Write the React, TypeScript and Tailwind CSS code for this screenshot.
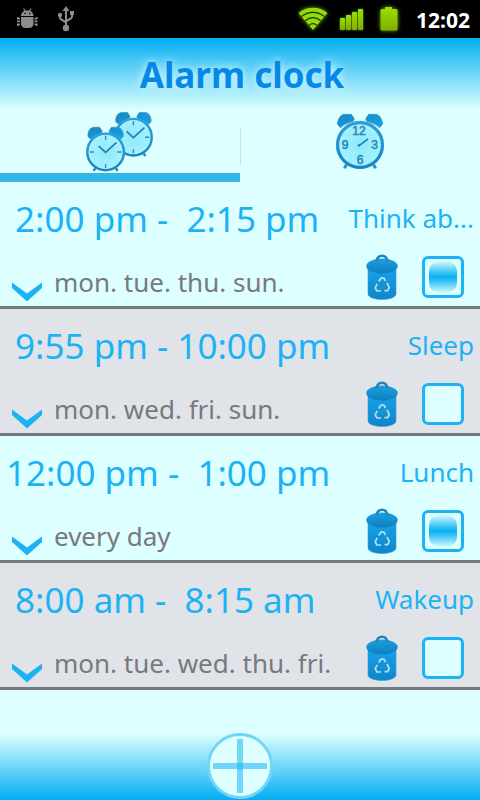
import { useState } from 'react'

const ALARMS = [
  { id: 'a1', time: ' 2:00 pm -  2:15 pm', name: 'Think ab...', days: 'mon. tue. thu. sun.', on: true },
  { id: 'a2', time: ' 9:55 pm - 10:00 pm', name: 'Sleep', days: 'mon. wed. fri. sun.', on: false },
  { id: 'a3', time: '12:00 pm -  1:00 pm', name: 'Lunch', days: 'every day', on: true },
  { id: 'a4', time: ' 8:00 am -  8:15 am', name: 'Wakeup', days: 'mon. tue. wed. thu. fri.', on: false },
]

type Alarm = (typeof ALARMS)[number]

function StatusBar() {
  return (
    <div className="flex h-[38px] items-center justify-between bg-black pl-4 pr-2">
      <div className="flex items-center gap-4">
        <svg width="24" height="22" viewBox="0 0 24 22" fill="#8c8c8c">
          <path d="M5 8C5 4.500 7.500 2.500 11.300 2.500S17.500 4.500 17.500 8z" />
          <path d="M7.500 0.500l2 3M15 0.500l-2 3" stroke="#8c8c8c" strokeWidth="1.200" />
          <circle cx="9" cy="5.500" r="0.800" fill="#000" />
          <circle cx="13.600" cy="5.500" r="0.800" fill="#000" />
          <path d="M5 9h12.500v6.500c0 3-2 4.500-4.500 4.500H9.500C7 20 5 18.500 5 15.500z" />
          <path d="M1 9h1.500v.8H4v1.700H1zM1 12.500h3v1.800H1zM1 18h1.500v-.8H4v-1.700H1zM21.500 9H20v.8h-1.500v1.700h3zM21.500 12.500h-3v1.800h3zM21.500 18H20v-.8h-1.500v-1.700h3z" />
        </svg>
        <svg width="20" height="26" viewBox="0 0 20 26" fill="#8c8c8c">
          <path d="M10 4v18M4 9v3c0 2 6 3 6 5M16 8v3c0 2-6 3-6 5" stroke="#8c8c8c" strokeWidth="2" fill="none" />
          <path d="M10 0l3.500 5h-7z" />
          <circle cx="10" cy="22" r="3.200" />
          <circle cx="4" cy="9" r="2.200" />
          <path d="M14 5h4v4h-4z" />
        </svg>
      </div>
      <div className="flex items-center gap-2">
        <svg width="34" height="30" viewBox="0 0 34 30" className="drop-shadow-[0_0_2px_#6aa800]">
          <defs>
            <linearGradient id="green" x1="0" y1="0" x2="0" y2="1">
              <stop offset="0" stopColor="#9be000" />
              <stop offset="1" stopColor="#7fae00" />
            </linearGradient>
          </defs>
          <path d="M17 26L2.500 9C10.500 2 23.500 2 31.500 9z" fill="#8fdc08" />
          <path d="M5.500 12.500c7-5.500 16-5.500 23 0M9.200 16.800c5-4 10.600-4 15.600 0M13 21.300c2.500-2 5.500-2 8 0" stroke="#1d3300" strokeWidth="1.200" fill="none" />
        </svg>
        <svg width="26" height="30" viewBox="0 0 26 30" fill="url(#green)" className="drop-shadow-[0_0_1px_#6aa800]">
          <rect x="2" y="14" width="5" height="12" rx="1" />
          <rect x="8" y="11" width="5" height="15" rx="1" />
          <rect x="14" y="8" width="5" height="18" rx="1" />
          <rect x="20" y="5" width="5" height="21" rx="1" />
        </svg>
        <svg width="34" height="30" viewBox="0 0 34 30" fill="url(#green)" className="drop-shadow-[0_0_2px_#6aa800]">
          <path d="M13 3h7v2h4q1.500 0 1.500 1.500v18.500q0 1.500-1.500 1.500H10q-1.500 0-1.500-1.500V6.500Q8.500 5 10 5h3z" />
        </svg>
        <span className="w-[58px] pt-0.5 text-center text-[21px] font-bold leading-6 text-white">12:02</span>
      </div>
    </div>
  )
}

function ClockDefs() {
  return (
    <defs>
      <linearGradient id="rim" x1="0" y1="0" x2="0" y2="1">
        <stop offset="0" stopColor="#2a9fdc" />
        <stop offset="1" stopColor="#1187c8" />
      </linearGradient>
      <linearGradient id="bell" x1="0" y1="0" x2="1" y2="1">
        <stop offset="0" stopColor="#1a86c4" />
        <stop offset="1" stopColor="#12a5ea" />
      </linearGradient>
      <radialGradient id="face">
        <stop offset="0" stopColor="#8ceafa" />
        <stop offset="1" stopColor="#a8f1ff" />
      </radialGradient>
    </defs>
  )
}

function SmallClock() {
  return (
    <g>
      <path d="M-29 46l-6 9M29 46l6 9" stroke="#2a86bb" strokeWidth="7" />
      <path d="M-51-44c-3-16 7-28 17-28h17l7 11-3 11c-12 3-20 8-27 15zM51-44c3-16-7-28-17-28H17l-7 11 3 11c12 3 20 8 27 15z" fill="url(#bell)" stroke="#3d93bf" strokeWidth="2" />
      <circle r="54" fill="url(#face)" stroke="#74a9bf" strokeWidth="6" />
      <circle r="53" fill="none" stroke="url(#rim)" strokeWidth="6" />
      <path d="M0-47v12M0 47V35M-46 0h12M46 0H34" stroke="#2a8fbe" strokeWidth="4" />
      <path d="M-20-17L0 1l32-29" fill="none" stroke="#1d82b4" strokeWidth="5" />
    </g>
  )
}

function TwoClocksIcon() {
  return (
    <svg width="69" height="62" viewBox="46 33 201 180">
      <ClockDefs />
      <g transform="translate(187 109)">
        <SmallClock />
      </g>
      <g transform="translate(106 152)">
        <SmallClock />
      </g>
    </svg>
  )
}

function ClockIcon() {
  return (
    <svg width="50" height="60" viewBox="77 36 150 180">
      <path d="M114 190l-9 15M190 190l9 15" stroke="#2a8fc6" strokeWidth="9" />
      <path d="M84 72c2-16 10-29 22-29h20l9 13-3 8c-17 4-29 10-39 19zM220 72c-2-16-10-29-22-29h-20l-9 13 3 8c17 4 29 10 39 19z" fill="url(#bell)" stroke="#3d93bf" strokeWidth="2" />
      <circle cx="152" cy="135" r="69" fill="url(#face)" stroke="#74a9bf" strokeWidth="7" />
      <circle cx="152" cy="135" r="67" fill="none" stroke="url(#rim)" strokeWidth="9" />
      <path d="M150 136l26-19" stroke="#1688c4" strokeWidth="5" />
      <circle cx="149" cy="136" r="4" fill="#1688c4" />
      <g fill="#2286b6" stroke="#2286b6" strokeWidth="1.500" fontSize="36" fontFamily="Liberation Sans, sans-serif" textAnchor="middle">
        <text x="149" y="105">12</text>
        <text x="196" y="148">3</text>
        <text x="152" y="192">6</text>
        <text x="107" y="148">9</text>
      </g>
    </svg>
  )
}

function TrashIcon() {
  return (
    <svg width="34" height="46" viewBox="0 0 34 46">
      <defs>
        <linearGradient id="can" x1="0" y1="0" x2="0" y2="1">
          <stop offset="0" stopColor="#18a3e8" />
          <stop offset="1" stopColor="#0f85c9" />
        </linearGradient>
        <linearGradient id="lid" x1="0" y1="0" x2="0" y2="1">
          <stop offset="0" stopColor="#1e9fe0" />
          <stop offset="1" stopColor="#0d7fc0" />
        </linearGradient>
      </defs>
      <path d="M3 13h28v27c0 3-6 5.500-14 5.500S3 43 3 40z" fill="url(#can)" stroke="#3a9ccf" strokeWidth="0.600" />
      <ellipse cx="17" cy="12" rx="15.700" ry="7.500" fill="url(#lid)" />
      <path d="M11.500 7.500C12 3.500 14 1.800 17 1.800s5 1.700 5.500 5.700" fill="none" stroke="#2386b9" strokeWidth="2.600" />
      <path d="M13.800 27.500l2-3.300h3.200l1.500 2.800M22 29l2.300 4.500-1.600 3.200h-3.200M16 37h-4l-1.800-3.200 2-4" fill="none" stroke="#b9dcef" strokeWidth="1.700" strokeLinejoin="round" />
    </svg>
  )
}

function AlarmRow({ alarm, onToggle }: { alarm: Alarm; onToggle: () => void }) {
  return (
    <li className="border-b-3 border-[#78797e] odd:bg-[#deffff] even:bg-[#e0e4e8]">
      <div className="flex h-[72px] items-center justify-between px-1.5 pt-0.5 text-[#1cb2f4]">
        <span className="whitespace-pre text-[35px]">{alarm.time}</span>
        <label htmlFor={alarm.id} className="pb-0.5 text-[26px]">
          {alarm.name}
        </label>
      </div>
      <div className="flex h-[52px] items-start pl-3 pr-4">
        <button aria-label="Show details" className="pt-7">
          <svg width="30" height="20" viewBox="0 0 30 20">
            <path d="M0 0.500l15 11L30 0.500v5.500L15.500 19h-1L0 6z" fill="#1cb2f4" />
          </svg>
        </button>
        <span className="ml-3 flex-1 text-[26px] leading-[56px] text-[#78797e]">{alarm.days}</span>
        <button aria-label="Delete alarm">
          <TrashIcon />
        </button>
        <input
          id={alarm.id}
          type="checkbox"
          checked={alarm.on}
          onChange={onToggle}
          className="ml-[23px] mt-0.5 flex size-[42px] appearance-none items-center justify-center rounded-md border-3 border-[#1cb2f4] bg-[#deffff] checked:before:h-[32px] checked:before:w-[28px] checked:before:rounded-[10px] checked:before:bg-linear-to-b/srgb checked:before:from-[#d2fbff] checked:before:via-[#03aef2] checked:before:to-[#d2fbff] checked:before:content-['']"
        />
      </div>
    </li>
  )
}

export default function App() {
  const [alarms, setAlarms] = useState(ALARMS)

  const toggle = (id: string) =>
    setAlarms(alarms.map((a) => (a.id === id ? { ...a, on: !a.on } : a)))

  return (
    <div className="flex min-h-screen flex-col bg-[#deffff] font-['Noto_Sans',sans-serif]">
      <StatusBar />
      <header className="flex h-[72px] items-center justify-center bg-linear-to-b/srgb from-[#03aef2] to-[#deffff] pl-1 pt-0.5">
        <h1 className="text-[35px] font-bold text-[#0688e8] [text-shadow:0_0_10px_#deffff]">Alarm clock</h1>
      </header>

      <nav className="flex h-[72px]">
        <button aria-label="Alarms" className="flex flex-1 items-center justify-center border-b-9 border-[#33b5e5]">
          <TwoClocksIcon />
        </button>
        <div className="mt-[18px] h-9 w-px bg-[#c4e2e2]" />
        <button aria-label="Clock" className="flex flex-1 items-center justify-center border-b-9 border-transparent">
          <ClockIcon />
        </button>
      </nav>

      <ul>
        {alarms.map((a) => (
          <AlarmRow key={a.id} alarm={a} onToggle={() => toggle(a.id)} />
        ))}
      </ul>

      <footer className="mt-auto flex h-[67px] justify-center bg-linear-to-b/srgb from-[#deffff] to-[#03aef2]">
        <button aria-label="Add alarm" className="self-start">
          <svg width="66" height="66" viewBox="0 0 66 66">
            <circle cx="33" cy="33" r="31.500" fill="#deffff" stroke="#70d6f7" strokeWidth="3" />
            <g fill="#1cb2f4" fillOpacity="0.550">
              <path d="M30 6h6v54h-6z" />
              <path d="M6 30h54v6H6z" />
            </g>
          </svg>
        </button>
      </footer>
    </div>
  )
}
